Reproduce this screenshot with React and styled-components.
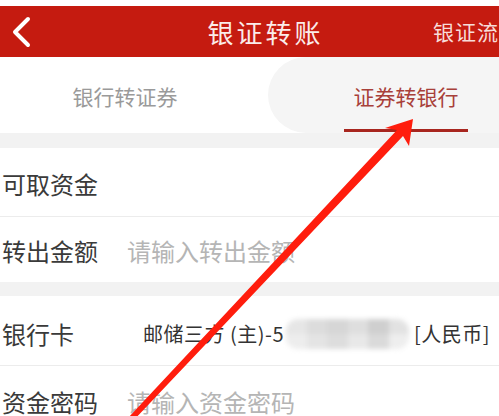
import React from 'react';
import styled, { createGlobalStyle } from 'styled-components';

const GlobalStyle = createGlobalStyle`
  html, body {
    margin: 0;
    padding: 0;
    background: #fff;
  }
  body {
    font-family: 'Noto Sans CJK SC', 'Noto Sans', sans-serif;
  }
`;

const Page = styled.div`
  position: relative;
  width: 499px;
  height: 416px;
  overflow: hidden;
  background: #fff;
`;

const TopStrip = styled.div`
  height: 6px;
  background: #fff;
`;

const Header = styled.div`
  height: 51px;
  background: #c51b10;
  display: flex;
  align-items: center;
  color: #fff;
`;

const BackButton = styled.div`
  width: 48px;
  padding-left: 11px;
  display: flex;
  align-items: center;
  box-sizing: border-box;
`;

const Title = styled.div`
  flex: 1;
  padding-left: 50px;
  text-align: center;
  font-size: 26px;
  letter-spacing: 3px;
  line-height: 1;
  color: #fbecea;
`;

const Action = styled.div`
  width: 66px;
  white-space: nowrap;
  font-size: 21px;
  letter-spacing: 1px;
  line-height: 1;
  color: #f7dcd9;
`;

const TabBar = styled.div`
  display: flex;
  height: 76px;
`;

const Tab = styled.div`
  flex-shrink: 0;
  width: ${p => p.$width}px;
  box-sizing: border-box;
  padding-top: 29px;
  padding-right: ${p => p.$shift || 0}px;
  display: flex;
  flex-direction: column;
  align-items: center;
  background: ${p => (p.$active ? '#f5f5f5' : '#fff')};
  border-radius: ${p => (p.$active ? '38px 0 0 38px' : '0')};
`;

const TabText = styled.div`
  font-size: 21px;
  line-height: 21px;
  color: ${p => (p.$active ? '#a8403a' : '#9a9a9a')};
`;

const Underline = styled.div`
  width: 124px;
  height: 3px;
  margin-top: 22px;
  background: ${p => (p.$active ? '#a8261f' : 'transparent')};
`;

const Gap = styled.div`
  height: ${p => p.$h}px;
  background: #f2f2f2;
`;

const Row = styled.div`
  height: ${p => p.$h}px;
  display: flex;
  align-items: center;
  padding-left: 2px;
  padding-top: ${p => p.$nudge || 0}px;
  box-sizing: border-box;
  border-bottom: ${p => (p.$line ? '1px solid #ececec' : 'none')};
`;

const Label = styled.div`
  width: 125px;
  flex-shrink: 0;
  font-size: 24px;
  line-height: 1;
  color: #3a3a3a;
`;

const Placeholder = styled.div`
  font-size: 24px;
  line-height: 1;
  color: #b5b5b5;
`;

const CardValue = styled.div`
  margin-left: 16px;
  display: flex;
  align-items: center;
  font-size: 20px;
  letter-spacing: 0.5px;
  line-height: 1;
  color: #333;
  white-space: nowrap;
`;

const Mosaic = styled.div`
  display: grid;
  grid-template-columns: repeat(6, 1fr);
  grid-template-rows: repeat(2, 1fr);
  width: 123px;
  height: 30px;
  margin: 0 5px 0 2px;
  filter: blur(2.5px);
  border-radius: 12px;
  overflow: hidden;
`;

const Cell = styled.div`
  background: ${p => p.$c};
`;

const Overlay = styled.svg`
  position: absolute;
  left: 0;
  top: 0;
  pointer-events: none;
`;

const mosaic = [
  '#e6e6e6', '#dcdcdc', '#d6d6d6', '#dedede', '#cfcfcf', '#e2e2e2',
  '#ededed', '#e4e4e4', '#dddddd', '#e8e8e8', '#dadada', '#eeeeee',
];

export default function App() {
  return (
    <Page>
      <GlobalStyle />
      <TopStrip />
      <Header>
        <BackButton>
          <svg width="22" height="32" viewBox="0 0 22 32">
            <polyline points="17,3 4,16 17,29" fill="none" stroke="#fff" strokeWidth="4" strokeLinecap="round" strokeLinejoin="round" />
          </svg>
        </BackButton>
        <Title>银证转账</Title>
        <Action>银证流水</Action>
      </Header>
      <TabBar>
        <Tab $width={268} $shift={18}>
          <TabText>银行转证券</TabText>
          <Underline />
        </Tab>
        <Tab $width={276} $active>
          <TabText $active>证券转银行</TabText>
          <Underline $active />
        </Tab>
      </TabBar>
      <Gap $h={15} />
      <Row $h={69} $line $nudge={4}>
        <Label>可取资金</Label>
      </Row>
      <Row $h={65} $nudge={2}>
        <Label>转出金额</Label>
        <Placeholder>请输入转出金额</Placeholder>
      </Row>
      <Gap $h={14} />
      <Row $h={70} $line $nudge={6}>
        <Label>银行卡</Label>
        <CardValue>
          邮储三方 (主)-5
          <Mosaic>
            {mosaic.map((c, i) => <Cell key={i} $c={c} />)}
          </Mosaic>
          <span>[人民币]</span>
        </CardValue>
      </Row>
      <Row $h={70} $nudge={2}>
        <Label>资金密码</Label>
        <Placeholder>请输入资金密码</Placeholder>
      </Row>
      <Overlay width="499" height="416" viewBox="0 0 499 416">
        <polygon
          points="413,119 409,146 403,136 132,422 128,418 397,130 385,128"
          fill="#ff1d0d"
        />
      </Overlay>
    </Page>
  );
}
